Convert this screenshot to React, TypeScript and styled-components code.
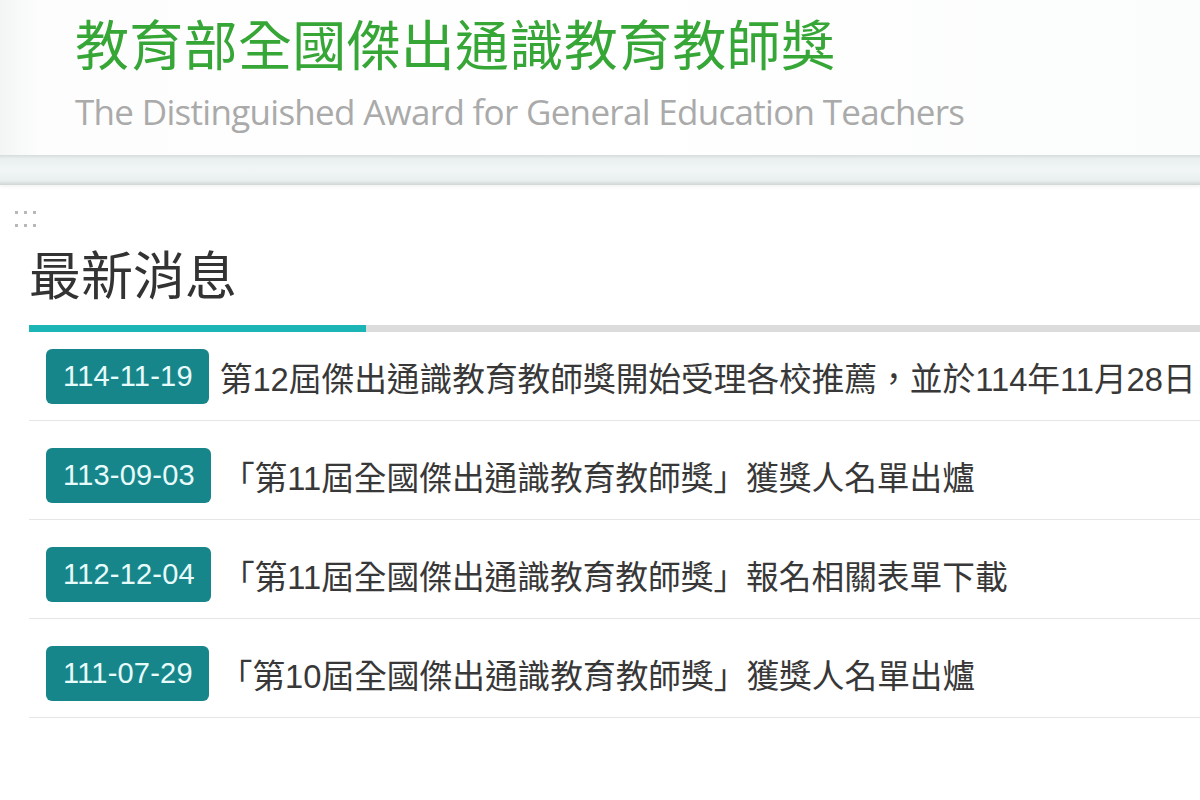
import * as React from 'react'
import styled, { createGlobalStyle } from 'styled-components'

const GlobalStyle = createGlobalStyle`
html, body {
  margin: 0;
  padding: 0;
  background: #fff;
  overflow: hidden;
}
`

const CJK = `"Noto Sans CJK TC", "Noto Sans", sans-serif`

const Page = styled.div`
width: 1200px;
height: 800px;
overflow: hidden;
background: #fff;
`

const Header = styled.header`
height: 155px;
box-sizing: border-box;
padding: 12px 0 0 75px;
background: linear-gradient(to right, #f3f5f5 0, #fdfdfd 40px, #fff 50%, #fbfcfc 100%);
`

const SiteTitle = styled.h1`
margin: 0;
font-family: ${CJK};
font-weight: 400;
font-size: 54px;
line-height: 62px;
color: #36a636;
letter-spacing: 0.3px;
`

const SiteSubtitle = styled.div`
margin-top: 16px;
font-family: "Open Sans", "Liberation Sans", sans-serif;
font-size: 35px;
line-height: 44px;
color: #aaaaaa;
letter-spacing: -0.7px;
`

const Band = styled.div`
height: 30px;
background: linear-gradient(to bottom, #d6dcdc 0, #e9efef 12%, #f1f5f5 50%, #e9efef 85%, #d0d6d6 100%);
box-shadow: 0 2px 3px rgba(0, 0, 0, 0.05);
`

const Module = styled.section`
padding: 26px 0 0 0;
`

const Handle = styled.div`
display: grid;
grid-template-columns: repeat(3, 3px);
gap: 10px 6px;
margin-left: 15px;
width: 22px;
`

const Dot = styled.span`
width: 3px;
height: 3px;
background: #b8b8b8;
`

const Heading = styled.h2`
margin: 8px 0 0 29px;
font-family: ${CJK};
font-weight: 400;
font-size: 52px;
line-height: 76px;
color: #333;
`

const TabLine = styled.div`
margin: 14px 0 0 29px;
height: 7px;
background: #dcdcdc;
display: flex;
`

const TabActive = styled.div`
width: 337px;
background: #1bb5b5;
`

const List = styled.ul`
list-style: none;
margin: 0 0 0 29px;
padding: 0;
`

const Row = styled.li`
display: flex;
align-items: center;
gap: 11px;
padding: 27px 0 16px 17px;
border-bottom: 1px solid #e6e6e6;
white-space: nowrap;
overflow: hidden;

&:first-child {
  padding-top: 17px;
}
`

const DateBadge = styled.span`
flex: none;
display: inline-flex;
align-items: center;
height: 55px;
padding: 0 16px 0 17px;
border-radius: 6px;
background: #17868a;
color: #e8fbfb;
font-family: "Liberation Sans", Arial, sans-serif;
font-size: 29px;
letter-spacing: 0.2px;
`

const Title = styled.a`
font-family: "Liberation Sans", ${CJK};
font-size: 32.7px;
color: #383838;
text-decoration: none;
`

const news = [
  { date: '114-11-19', title: '第12屆傑出通識教育教師獎開始受理各校推薦，並於114年11月28日' },
  { date: '113-09-03', title: '「第11屆全國傑出通識教育教師獎」獲獎人名單出爐' },
  { date: '112-12-04', title: '「第11屆全國傑出通識教育教師獎」報名相關表單下載' },
  { date: '111-07-29', title: '「第10屆全國傑出通識教育教師獎」獲獎人名單出爐' },
]

export default function App() {
  return (
    <Page>
      <GlobalStyle />
      <Header>
        <SiteTitle>教育部全國傑出通識教育教師獎</SiteTitle>
        <SiteSubtitle>The Distinguished Award for General Education Teachers</SiteSubtitle>
      </Header>
      <Band />
      <Module>
        <Handle>
          {[0, 1, 2, 3, 4, 5].map(i => <Dot key={i} />)}
        </Handle>
        <Heading>最新消息</Heading>
        <TabLine>
          <TabActive />
        </TabLine>
        <List>
          {news.map(n => (
            <Row key={n.date}>
              <DateBadge>{n.date}</DateBadge>
              <Title href="#">{n.title}</Title>
            </Row>
          ))}
        </List>
      </Module>
    </Page>
  )
}
